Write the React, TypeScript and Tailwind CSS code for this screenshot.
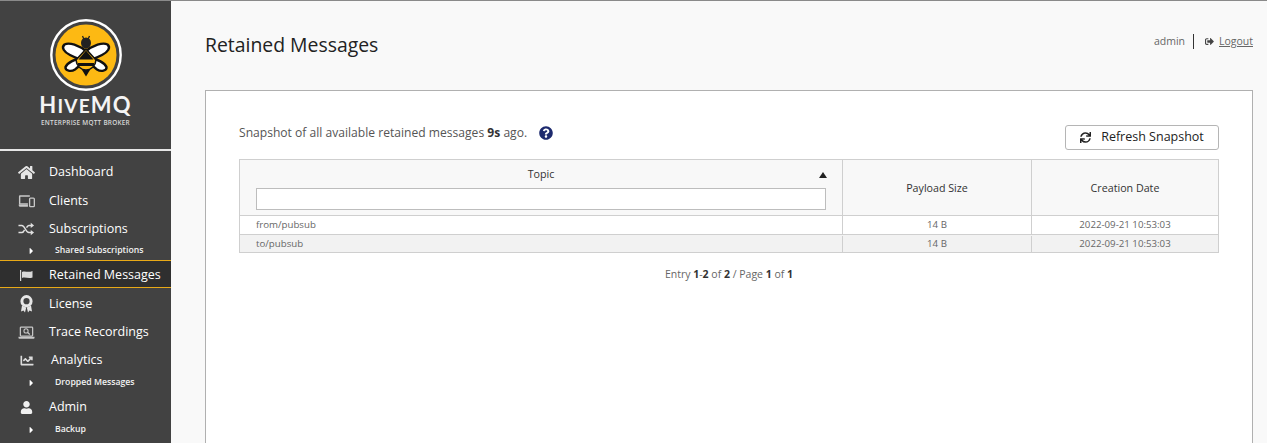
import React from "react";
import { FaHome, FaChartLine, FaUser, FaSignOutAlt, FaSync, FaQuestionCircle, FaCaretRight } from "react-icons/fa";

const Logo = () => (
  <svg width="72" height="72" viewBox="0 0 72 72" className="block">
    <circle cx="36" cy="36" r="34.7" fill="#424242" stroke="#fff" strokeWidth="2.4" />
    <circle cx="36" cy="36" r="30.5" fill="#fdb913" />
    <path d="M37 33 C29 26 19 23 14.5 25.5 C11 28.5 14 33 20 36 C25 38.5 31 41 36 42 Z" fill="#fff" stroke="#111" strokeWidth="2.4" strokeLinejoin="round" />
    <path d="M35 33 C43 26 53 23 57.5 25.5 C61 28.5 58 33 52 36 C47 38.5 41 41 36 42 Z" fill="#fff" stroke="#111" strokeWidth="2.4" strokeLinejoin="round" />
    <path d="M31 39 C25 40 17 44 15.5 48 C15 52 21 53 25 50.5 C28 48.5 31 45 32 43 Z" fill="#fff" stroke="#111" strokeWidth="2.4" strokeLinejoin="round" />
    <path d="M41 39 C47 40 55 44 56.5 48 C57 52 51 53 47 50.5 C44 48.5 41 45 40 43 Z" fill="#fff" stroke="#111" strokeWidth="2.4" strokeLinejoin="round" />
    <ellipse cx="36" cy="24" rx="5" ry="5.6" fill="#222" />
    <path d="M32.5 17 L33.8 20 M39.5 17 L38.2 20" stroke="#222" strokeWidth="1.3" />
    <path d="M36 30 L46 41 C45.5 47 41 51 36 51 C31 51 26.5 47 26 41 Z" fill="#fdb913" stroke="#111" strokeWidth="1.6" strokeLinejoin="round" />
    <path d="M36 31.5 L43.5 40.5 H28.5 Z" fill="#111" />
    <path d="M28 44 H44 V47 H28 Z" fill="#111" />
    <path d="M32 51 H40 L36 57.5 Z" fill="#111" />
  </svg>
);

const ClientsIcon = () => (
  <svg width="18" height="14" viewBox="0 0 18 14" fill="none">
    <path d="M1 2 Q1 1 2 1 H12.5 V2.5 H2.5 V9.5 H10.5 V11 H1 Z" fill="#c8c8c8" />
    <rect x="12.3" y="4" width="5" height="9" rx="1" stroke="#c8c8c8" strokeWidth="1.4" />
    <path d="M0.5 11 H10.5 V13 H1.5 Z" fill="#c8c8c8" />
  </svg>
);

const ShuffleIcon = () => (
  <svg width="18" height="14" viewBox="0 0 18 14" fill="none" stroke="#e0e0e0" strokeWidth="1.6">
    <path d="M0.5 3.2 H4 C7.5 3.2 8 10.8 11.5 10.8 H14.5" />
    <path d="M0.5 10.8 H4 C5.5 10.8 6.3 9.4 7 8 M9 5.5 C9.7 4.2 10.3 3.2 11.5 3.2 H14.5" />
    <path d="M13.5 0.5 L17 3.2 L13.5 6 Z M13.5 8 L17 10.8 L13.5 13.5 Z" fill="#e0e0e0" stroke="none" />
  </svg>
);

const FlagIcon = () => (
  <svg width="13" height="11" viewBox="0 0 13 11">
    <rect x="0" y="0" width="1.2" height="11" fill="#d8d8d8" />
    <path d="M2 2 C5 0.5 8 3 12.5 1 V7.5 C8 9 5 6.5 2 8 Z" fill="#d8d8d8" />
  </svg>
);

const AwardIcon = () => (
  <svg width="13" height="18" viewBox="0 0 13 18">
    <circle cx="6.5" cy="6.2" r="4.6" fill="none" stroke="#e6e6e6" strokeWidth="3" />
    <path d="M2 10.5 L1 16.5 L3.5 15.5 L5 17.5 L6.2 12.5 Z M11 10.5 L12 16.5 L9.5 15.5 L8 17.5 L6.8 12.5 Z" fill="#e6e6e6" />
  </svg>
);

const TraceIcon = () => (
  <svg width="18" height="14" viewBox="0 0 18 14" fill="none">
    <rect x="2.5" y="0.7" width="13" height="9.6" rx="0.8" stroke="#c8c8c8" strokeWidth="1.3" />
    <circle cx="8.5" cy="4.8" r="2.2" stroke="#c8c8c8" strokeWidth="1.1" />
    <path d="M10.2 6.5 L12.5 8.6" stroke="#c8c8c8" strokeWidth="1.3" />
    <path d="M0.5 11 H17.5 V12 Q17.5 13 16.5 13 H1.5 Q0.5 13 0.5 12 Z" fill="#c8c8c8" />
  </svg>
);

const Item = ({ icon, label, h, active, labelClass = "pl-[49px]" }: { icon: React.ReactNode; label: string; h: string; active?: boolean; labelClass?: string }) => (
  <div className={`relative flex items-center pt-[2px] text-[12.5px] text-white ${h} ${active ? "bg-[#2f2f2f] border-y border-[#e8a917]" : ""}`}>
    <span className="absolute left-[18px] w-[17px] flex justify-center">{icon}</span>
    <span className={labelClass}>{label}</span>
  </div>
);

const Sub = ({ label, h }: { label: string; h: string }) => (
  <div className={`flex items-center text-[8.7px] font-semibold text-[#f2f2f2] ${h}`}>
    <FaCaretRight className="ml-[28px] w-[7px] h-[10px] text-white" />
    <span className="pl-[20px]">{label}</span>
  </div>
);

const Cell = ({ children, className = "" }: { children: React.ReactNode; className?: string }) => (
  <div className={`flex items-center text-[9.7px] text-[#666] ${className}`}>{children}</div>
);

export default function App() {
  return (
    <div className="flex h-[443px] w-[1267px] overflow-hidden bg-[#f9f9f9] font-['Open_Sans',sans-serif] border-t border-[#8a8a8a]">
      <aside className="w-[171px] shrink-0 bg-[#424242]">
        <div className="h-[150px] flex flex-col items-center border-b-2 border-[#e6e6e6] pt-[18px]">
          <Logo />
          <div className="mt-[1px] text-[22px] leading-[26px] font-bold text-[#f4f4f4] tracking-[1.2px] font-['Lato',sans-serif]">
            H<span className="text-[19px]">IVE</span>MQ
          </div>
          <div className="text-[6.4px] leading-[8px] text-[#d8d8d8] font-semibold tracking-[0.25px]">ENTERPRISE MQTT BROKER</div>
        </div>
        <div className="pt-[6px]">
          <Item h="h-[29px]" label="Dashboard" icon={<FaHome className="w-[17px] h-[15px] text-[#e6e6e6]" />} />
          <Item h="h-[28px]" label="Clients" icon={<ClientsIcon />} />
          <Item h="h-[28px]" label="Subscriptions" icon={<ShuffleIcon />} />
          <Sub h="h-[18px]" label="Shared Subscriptions" />
          <Item h="h-[28px]" active label="Retained Messages" icon={<FlagIcon />} />
          <Item h="h-[30px]" label="License" icon={<AwardIcon />} />
          <Item h="h-[27px]" label="Trace Recordings" icon={<TraceIcon />} />
          <Item h="h-[29px]" label="Analytics" labelClass="pl-[51px]" icon={<FaChartLine className="w-[16px] h-[13px] text-[#dcdcdc]" />} />
          <Sub h="h-[16px] pt-[2px]" label="Dropped Messages" />
          <Item h="h-[33px]" label="Admin" icon={<FaUser className="w-[13px] h-[13px] text-[#f0f0f0]" />} />
          <Sub h="h-[12px] pt-[2px]" label="Backup" />
        </div>
      </aside>
      <main className="flex-1 min-w-0 pl-[34px] pr-[14px] pt-[27px] flex flex-col">
        <header className="flex justify-between h-[62px] shrink-0">
          <h1 className="text-[19.4px] leading-[34px] text-[#222]">Retained Messages</h1>
          <div className="flex items-start text-[10.5px] text-[#666] pt-[6px]">
            <span className="leading-[15px] pr-[8px] border-r border-[#333]">admin</span>
            <FaSignOutAlt className="ml-[11px] mt-[3px] w-[9px] h-[9px] text-[#444]" />
            <span className="ml-[5px] leading-[15px] underline">Logout</span>
          </div>
        </header>
        <section className="h-[400px] shrink-0 bg-white border border-[#b0b0b0] px-[33px] pt-[32px]">
          <div className="flex justify-between items-start h-[36px]">
            <div className="flex items-center text-[12.1px] leading-[18px] text-[#555] pt-[1px]">
              <span>Snapshot of all available retained messages <b className="font-bold text-[#333]">9s</b> ago.</span>
              <FaQuestionCircle className="ml-[12px] w-[14px] h-[14px] text-[#1d2a6e]" />
            </div>
            <button className="flex items-center justify-center w-[154px] h-[25px] mt-[2px] bg-white border border-[#b5b5b5] rounded-[3px] text-[12.5px] text-[#222]">
              <FaSync className="w-[11px] h-[11px] mr-[10px] text-[#222]" />
              Refresh Snapshot
            </button>
          </div>
          <div className="border border-[#cfcfcf] border-b-0">
            <div className="grid grid-cols-[603px_189px_1fr] h-[56px] bg-[#f8f8f8] border-b border-[#cfcfcf]">
              <div className="relative border-r border-[#cfcfcf] px-[16px] pt-[6px]">
                <div className="text-center text-[10.7px] leading-[16px] text-[#333]">Topic</div>
                <svg width="8" height="6" viewBox="0 0 8 6" className="absolute right-[15px] top-[12px]"><path d="M4 0 L8 6 H0 Z" fill="#222" /></svg>
                <input aria-label="Topic filter" className="block mt-[6px] w-full h-[22px] bg-white border border-[#bdbdbd]" />
              </div>
              <div className="flex items-center justify-center pt-[2px] border-r border-[#cfcfcf] text-[10.7px] text-[#333]">Payload Size</div>
              <div className="flex items-center justify-center pt-[2px] text-[10.7px] text-[#333]">Creation Date</div>
            </div>
            {[
              { t: "from/pubsub", bg: "bg-white", h: "h-[19px]" },
              { t: "to/pubsub", bg: "bg-[#f2f2f2]", h: "h-[18px] pt-[1px]" },
            ].map((r) => (
              <div key={r.t} className={`grid grid-cols-[603px_189px_1fr] ${r.h} ${r.bg} border-b border-[#cfcfcf]`}>
                <Cell className="pl-[16px] border-r border-[#cfcfcf]">{r.t}</Cell>
                <Cell className="justify-center border-r border-[#cfcfcf]">14 B</Cell>
                <Cell className="justify-center">2022-09-21 10:53:03</Cell>
              </div>
            ))}
          </div>
          <div className="mt-[13px] text-center text-[10.5px] leading-[16px] text-[#666]">
            Entry <b className="text-[#333]">1</b>-<b className="text-[#333]">2</b> of <b className="text-[#333]">2</b> / Page <b className="text-[#333]">1</b> of <b className="text-[#333]">1</b>
          </div>
        </section>
      </main>
    </div>
  );
}
